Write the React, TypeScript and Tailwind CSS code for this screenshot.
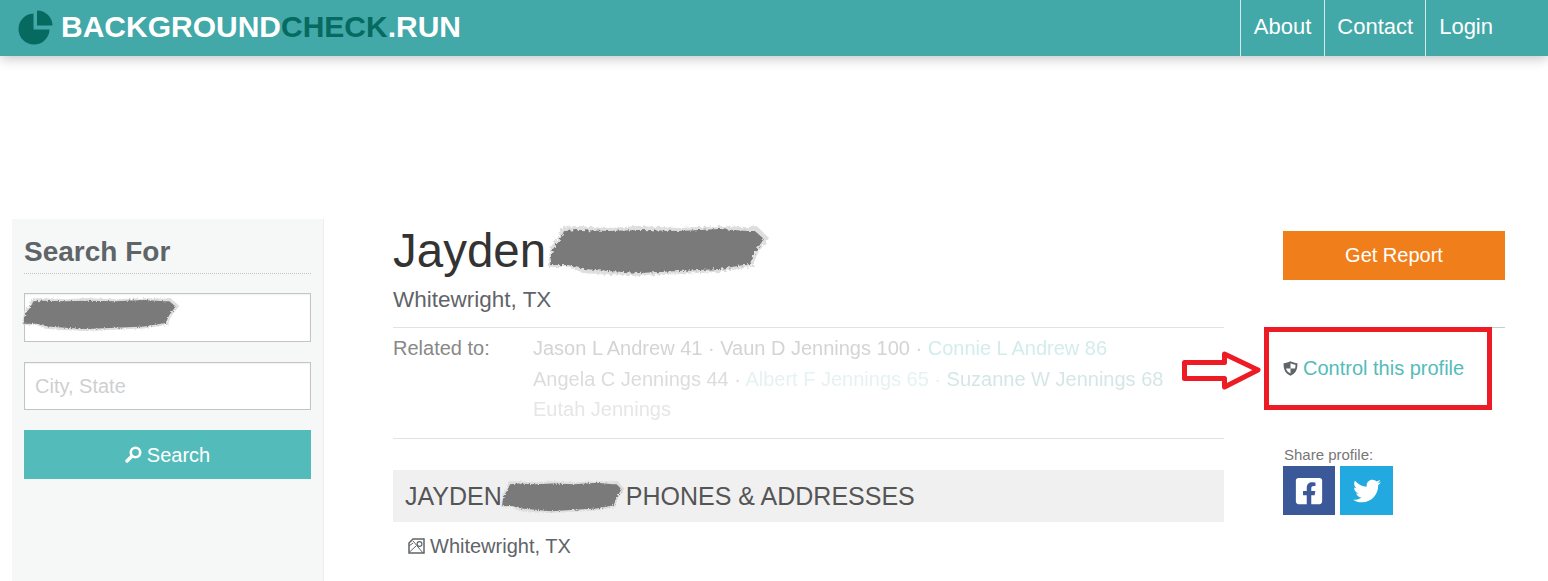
import { FaFacebookSquare, FaTwitter } from 'react-icons/fa';

// Grey marker scribble that hides a surname in the screenshot
function Scribble({ className }: { className: string }) {
  return (
    <svg className={className} viewBox="0 0 220 56" preserveAspectRatio="none" aria-hidden="true">
      <defs>
        <filter id="rough" x="-5%" y="-15%" width="110%" height="130%">
          <feTurbulence type="fractalNoise" baseFrequency="0.35" numOctaves="2" seed="4" />
          <feDisplacementMap in="SourceGraphic" scale="5" />
          <feGaussianBlur stdDeviation="0.7" />
        </filter>
      </defs>
      <g filter="url(#rough)">
        <path
          d="M3 24 L10 14 L14 4 L30 3 L60 5 L90 3 L130 5 L170 3 L198 4 L207 3 L219 15 L208 30 L202 44 L170 49 L130 51 L90 53 L60 52 L36 50 L20 44 L0 44 L1 34 Z"
          fill="#dedede"
        />
        <path
          d="M5 26 L11 18 L16 8 L30 7 L60 8 L90 7 L130 8 L170 6 L198 8 L205 8 L214 16 L205 29 L200 41 L170 46 L130 48 L90 50 L60 48 L36 46 L20 42 L2 42 L3 34 Z"
          fill="#7a7a7a"
        />
      </g>
    </svg>
  );
}

function LogoIcon() {
  return (
    <svg className="w-[35px] h-[35px]" viewBox="0 0 35 35" aria-hidden="true">
      <path d="M15.5 3.5 V19.5 H31.5 A15.5 15.5 0 1 1 15.5 3.5 Z" fill="#066a60" />
      <path d="M19 0.5 A15.5 15.5 0 0 1 34.5 15.5 H19 Z" fill="#066a60" />
    </svg>
  );
}

function ShieldIcon() {
  return (
    <svg className="w-[15px] h-[15px] shrink-0" viewBox="0 0 15 15" aria-hidden="true">
      <path d="M7.5 0.3 C9.5 1.6 12 2 14.4 2.2 C14.8 8 12.5 12.6 7.5 14.7 C2.5 12.6 0.2 8 0.6 2.2 C3 2 5.5 1.6 7.5 0.3 Z" fill="#5f6468" />
      <path d="M7.5 2.3 C9 3.2 10.8 3.6 12.5 3.8 C12.6 5.2 12.4 6.4 12 7.5 H7.5 Z M7.5 7.5 V12.6 C5.2 11.4 3.6 9.8 3 7.5 Z" fill="#fff" />
    </svg>
  );
}

function MapIcon() {
  return (
    <svg className="w-[17px] h-[16px] shrink-0" viewBox="0 0 17 16" fill="none" stroke="#5f6468" strokeWidth="1.5" aria-hidden="true">
      <path d="M5 1 H16 V15 H1 V5 Z" />
      <path d="M1 14.5 L8 8 M5 3 L15 15 M1 8 L5 5" strokeWidth="1" />
      <circle cx="11.5" cy="6" r="2.4" strokeWidth="1.2" />
    </svg>
  );
}

function SearchIcon() {
  return (
    <svg className="w-[17px] h-[17px]" viewBox="0 0 17 17" fill="none" stroke="#fff" aria-hidden="true">
      <circle cx="10.5" cy="6.5" r="4.7" strokeWidth="2.6" />
      <path d="M6.8 10.2 L2 15" strokeWidth="3.4" strokeLinecap="round" />
    </svg>
  );
}

function Header() {
  return (
    <header className="relative z-10 flex h-[56px] items-stretch justify-between bg-[#42a8a8] shadow-[0_2px_12px_rgba(0,0,0,0.25)]">
      <a className="flex items-center gap-[8px] pb-[2px] pl-[18px] text-[30px] font-bold text-white">
        <LogoIcon />
        <span className="pb-[2px]">
          BACKGROUND<span className="text-[#066a60]">CHECK</span>.RUN
        </span>
      </a>
      <nav className="flex pr-[41px] text-[22px] text-white">
        <a className="flex items-center border-l border-[#d5e9e9] pb-[3px] pl-[13px] pr-[13px]">About</a>
        <a className="flex items-center border-l border-[#d5e9e9] pb-[3px] pl-[12px] pr-[12px]">Contact</a>
        <a className="flex items-center border-l border-[#d5e9e9] pb-[3px] pl-[13px] pr-[14px]">Login</a>
      </nav>
    </header>
  );
}

function Sidebar() {
  return (
    <aside className="ml-[12px] mt-[163px] h-[400px] w-[312px] shrink-0 border-r border-[#eceeed] bg-[#f6f8f7] pl-[12px] pr-[12px]">
      <h3 className="mt-[15px] border-b border-dotted border-[#c4c4c4] pb-[3px] text-[28px] font-bold leading-[36px] text-[#5f6468]">
        Search For
      </h3>
      <div className="relative mt-[19px] h-[49px] border border-[#c4c4c4] bg-white shadow-[inset_0_1px_2px_rgba(0,0,0,0.06)]">
        <Scribble className="absolute left-[-3px] top-[2px] h-[37px] w-[158px]" />
      </div>
      <div className="mt-[20px] flex h-[48px] items-center border border-[#c4c4c4] bg-white pl-[10px] text-[20px] text-[#cfcfcf] shadow-[inset_0_1px_2px_rgba(0,0,0,0.06)]">
        City, State
      </div>
      <button className="mt-[20px] flex h-[49px] w-full items-center justify-center gap-[5px] bg-[#53bcba] text-[20px] text-white">
        <SearchIcon />
        Search
      </button>
    </aside>
  );
}

function Main() {
  return (
    <main className="ml-[69px] mt-[163px] w-[831px] shrink-0">
      <div className="relative">
        <h1 className="mt-[4px] text-[47.5px] leading-[56px] text-[#333333]">Jayden</h1>
        <Scribble className="absolute left-[155px] top-[0px] h-[56px] w-[222px]" />
      </div>
      <p className="mt-[7px] text-[22.5px] leading-[28px] text-[#5f6468]">Whitewright, TX</p>
      <div className="mt-[13px] flex h-[112px] border-y border-[#e2e2e2] pt-[5px]">
        <span className="w-[140px] shrink-0 text-[20px] leading-[30px] text-[#888888]">Related to:</span>
        <p className="whitespace-nowrap text-[20px] leading-[30.5px] text-[#e8e8e8] blur-[0.4px]">
          <span className="text-[#d4d4d4]">Jason L Andrew 41 · Vaun D Jennings 100 · </span>
          <span className="text-[#d3ecec]">Connie L Andrew 86</span>
          <br />
          <span className="text-[#dcdcdc]">Angela C Jennings 44 · </span>
          <span className="text-[#e6f2f2]">Albert F Jennings 65 · </span>
          <span className="text-[#d6e6e6]">Suzanne W Jennings 68</span>
          <br />
          <span className="text-[#e6e6e6]">Eutah Jennings</span>
        </p>
      </div>
      <div className="relative mt-[31px] flex h-[52px] items-center bg-[#f0f0f0] pl-[12px] pt-[2px] text-[25px] text-[#555555]">
        <span>JAYDEN</span>
        <span className="ml-[124px]">PHONES &amp; ADDRESSES</span>
        <Scribble className="absolute left-[108px] top-[9px] h-[36px] w-[124px]" />
      </div>
      <div className="mt-[10px] flex items-center gap-[5px] pl-[15px] text-[20px] leading-[28px] text-[#5f6468]">
        <MapIcon />
        Whitewright, TX
      </div>
    </main>
  );
}

function RightColumn() {
  return (
    <section className="ml-[59px] mt-[175px] w-[222px] shrink-0">
      <button className="h-[49px] w-full bg-[#f07f1b] pb-[2px] text-[20px] text-white">Get Report</button>
      <div className="mt-[47px] flex h-[81px] items-center gap-[5px] border-t border-[#cccccc] text-[20px] text-[#53bcba]">
        <ShieldIcon />
        Control this profile
      </div>
      <p className="mt-[38px] pl-px text-[15px] leading-[17px] text-[#777777]">Share profile:</p>
      <div className="mt-[3px] flex gap-[5px]">
        <a className="flex h-[49px] w-[52px] items-center justify-center bg-[#3b5998] text-[30px] text-white">
          <FaFacebookSquare />
        </a>
        <a className="flex h-[49px] w-[53px] items-center justify-center bg-[#22a9df] text-[28px] text-white">
          <FaTwitter />
        </a>
      </div>
    </section>
  );
}

// Red box and arrow someone drew over the screenshot
function Annotation() {
  return (
    <>
      <div className="absolute left-[1264px] top-[327px] h-[83px] w-[228px] border-[5px] border-[#ed1c24]" />
      <svg className="absolute left-[1180px] top-[348px] h-[46px] w-[86px]" viewBox="0 0 86 46" aria-hidden="true">
        <path d="M4.5 14.5 H44.5 V6 L78 22 L44.5 39 V30.5 H4.5 Z" fill="#fff" stroke="#ed1c24" strokeWidth="5" strokeLinejoin="round" />
      </svg>
    </>
  );
}

export default function App() {
  return (
    <div className="relative h-[581px] overflow-hidden bg-white font-['Liberation_Sans',Arial,sans-serif]">
      <Header />
      <div className="flex">
        <Sidebar />
        <Main />
        <RightColumn />
      </div>
      <Annotation />
    </div>
  );
}
